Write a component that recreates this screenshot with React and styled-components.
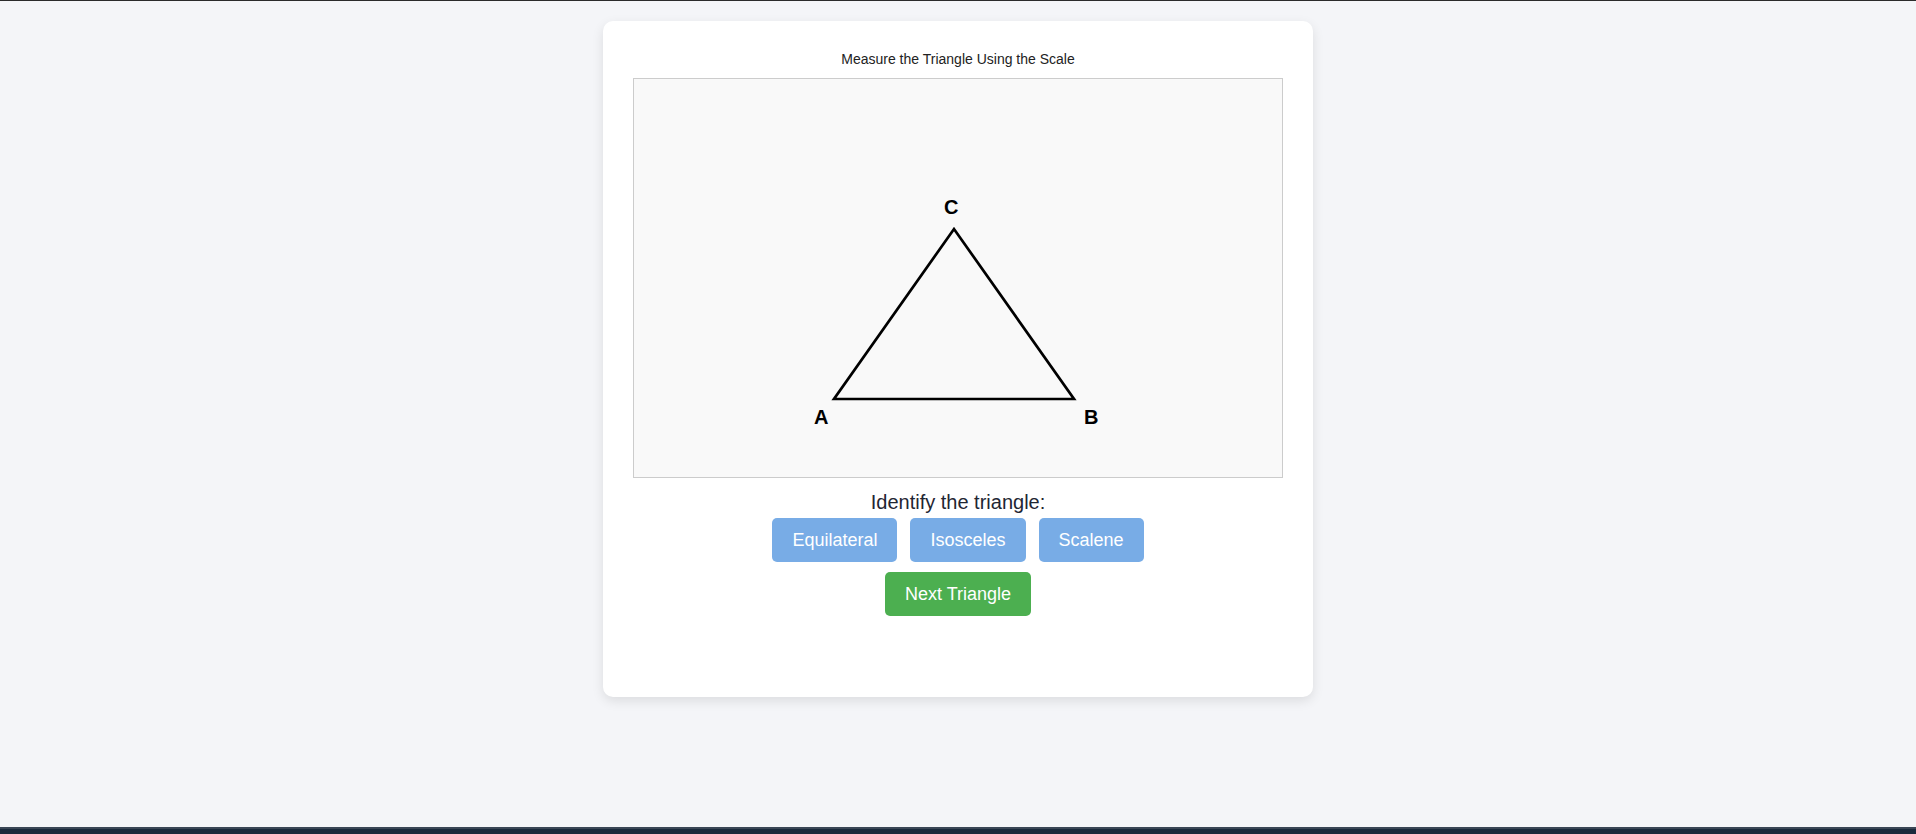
import React from "react";
import styled, { createGlobalStyle } from "styled-components";

const GlobalStyle = createGlobalStyle`
  html, body {
    margin: 0;
    padding: 0;
    height: 100%;
  }
  body {
    background: #f4f5f8;
    font-family: "Liberation Sans", Arial, sans-serif;
  }
  #root {
    min-height: 100vh;
    display: flex;
    flex-direction: column;
  }
`;

const TopLine = styled.div`
  height: 1px;
  background: #2b2b2b;
`;

const Main = styled.main`
  flex: 1;
  display: flex;
  justify-content: center;
  align-items: flex-start;
  padding-top: 20px;
`;

const Card = styled.div`
  width: 710px;
  box-sizing: border-box;
  padding: 30px 30px 71px;
  background: #ffffff;
  border-radius: 10px;
  box-shadow: 0 4px 12px rgba(0, 0, 0, 0.1);
  display: flex;
  flex-direction: column;
  align-items: center;
`;

const Title = styled.h2`
  margin: 0 0 11px;
  font-size: 14px;
  font-weight: normal;
  line-height: 16px;
  color: #222;
`;

const Board = styled.div`
  width: 650px;
  height: 400px;
  box-sizing: border-box;
  border: 1px solid #cccccc;
  background: #f9f9f9;
`;

const Prompt = styled.p`
  margin: 13px 0 4px;
  font-size: 20px;
  color: #1f2633;
`;

const Row = styled.div`
  display: flex;
  justify-content: center;
  gap: 13px;
  margin-bottom: 10px;
`;

const Button = styled.button`
  font-family: "Liberation Sans", Arial, sans-serif;
  font-size: 18px;
  line-height: 20px;
  padding: 12px 20px;
  border: none;
  border-radius: 5px;
  color: #ffffff;
  background: ${(props) => (props.variant === "next" ? "#4caf50" : "#78ace6")};
  cursor: pointer;
`;

const BottomBar = styled.div`
  height: 5px;
  border-top: 2px solid #3a4656;
  background: #1a2a3c;
`;

const Triangle = () => {
  const a = { x: 200, y: 320 };
  const b = { x: 440, y: 320 };
  const c = { x: 320, y: 150 };
  const label = {
    fontFamily: "Liberation Sans, Arial, sans-serif",
    fontSize: 20,
    fontWeight: "bold",
    fill: "#000",
  };
  return (
    <svg width="648" height="398" viewBox="0 0 648 398">
      <polygon
        points={`${a.x},${a.y} ${b.x},${b.y} ${c.x},${c.y}`}
        fill="none"
        stroke="#000"
        strokeWidth="2.7"
        strokeLinejoin="miter"
      />
      <text x={a.x - 20} y={a.y + 25} style={label}>A</text>
      <text x={b.x + 10} y={b.y + 25} style={label}>B</text>
      <text x={c.x - 10} y={c.y - 15} style={label}>C</text>
    </svg>
  );
};

const App = () => {
  return (
    <>
      <GlobalStyle />
      <TopLine />
      <Main>
        <Card>
          <Title>Measure the Triangle Using the Scale</Title>
          <Board>
            <Triangle />
          </Board>
          <Prompt>Identify the triangle:</Prompt>
          <Row>
            <Button>Equilateral</Button>
            <Button>Isosceles</Button>
            <Button>Scalene</Button>
          </Row>
          <Row>
            <Button variant="next">Next Triangle</Button>
          </Row>
        </Card>
      </Main>
      <BottomBar />
    </>
  );
};

export default App;
